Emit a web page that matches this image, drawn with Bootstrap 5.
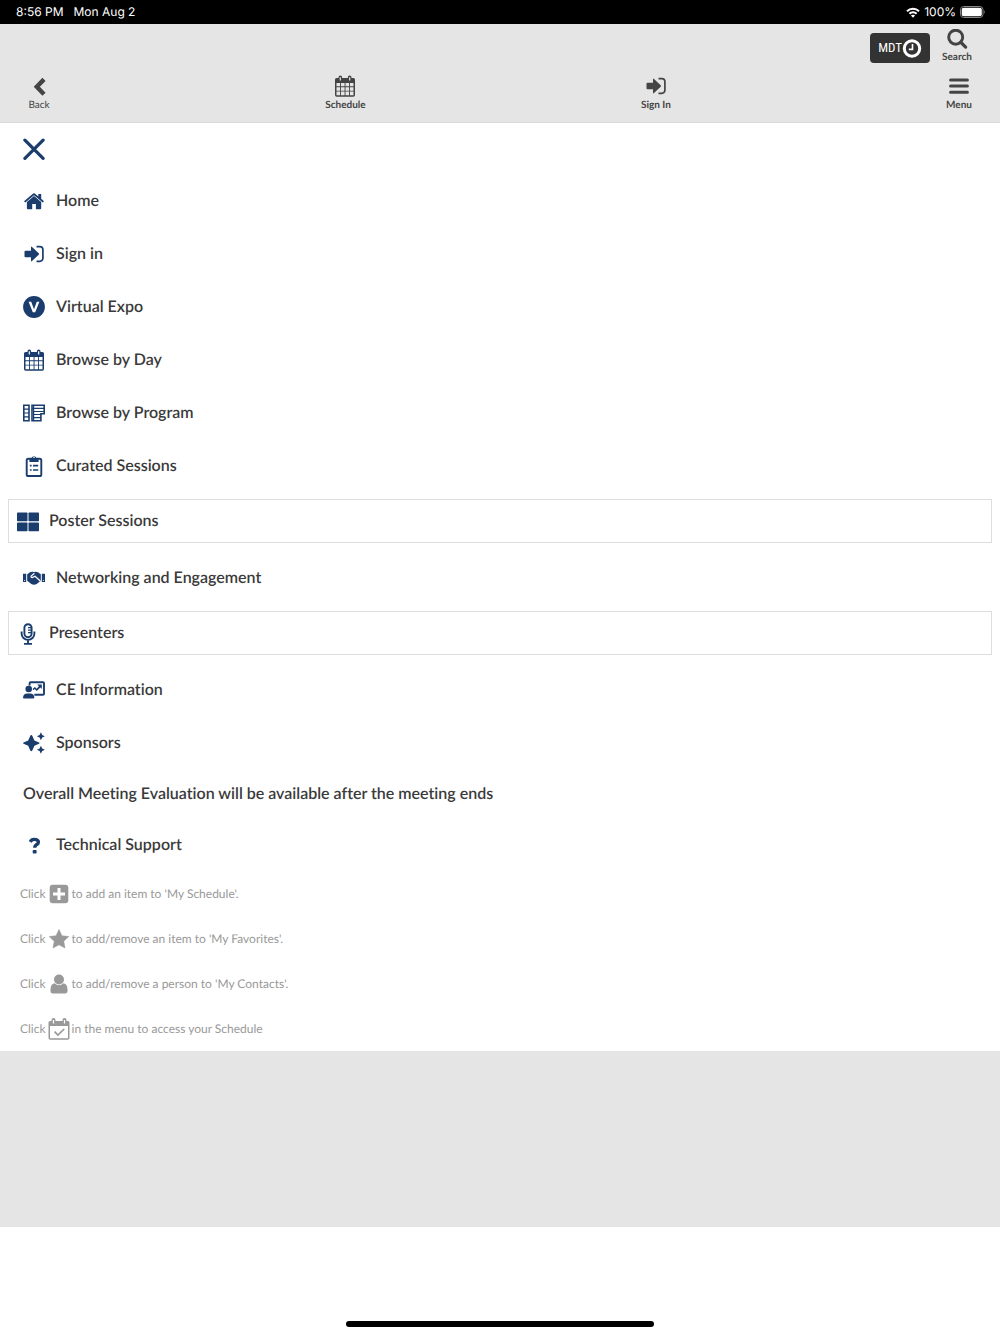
<!DOCTYPE html>
<html lang="en">
<head>
<meta charset="utf-8">
<meta name="viewport" content="width=device-width, initial-scale=1">
<title>Meeting menu</title>
<link rel="stylesheet" href="https://cdn.jsdelivr.net/npm/bootstrap@5.3.0/dist/css/bootstrap.min.css">
<style>
  :root { --navy: #1b3d6e; --ink: #3a3a3a; --panel: #e5e5e5; }
  body { font-family: Lato, sans-serif; color: var(--ink); background: #fff; font-variant-ligatures: none; text-rendering: geometricPrecision; }
  a { color: inherit; text-decoration: none; }
  svg { display: block; flex: none; }
  .status-bar { height: 24px; padding: 0 15px 0 16px; background: #000; color: #fff; font: 400 12px/24px Inter, sans-serif; }
  .clock { gap: 10px; }
  .app-header { background: var(--panel); border-bottom: 1px solid #d9d9d9; color: #444; padding: 5px 28px 10px; }
  .tool { display: flex; flex-direction: column; align-items: center; gap: 1px; font-size: 10px; line-height: 14px; font-weight: 700; }
  .tool-row { margin-top: 11px; }
  .zone-btn { margin-top: 4px; height: 30px; padding: 0 8px; background: #333; color: #fff; border: 0; border-radius: 4px; font: 13px/30px "Roboto Condensed", "Open Sans Condensed", Roboto, sans-serif; }
  .close-row { height: 51px; padding: 0 23px; }
  .menu-item { display: flex; align-items: center; gap: 11px; min-height: 53px; padding: 0 23px; font-size: 16px; line-height: 20px; font-weight: 600; }
  .menu-item svg { color: var(--navy); }
  .menu-item.boxed { gap: 10px; min-height: 44px; margin: 7px 8px 8px; padding: 0 8px; border: 1px solid #dcdfe0; }
  .menu-item.boxed svg { margin-top: 2px; }
  .menu-note { padding: 15px 23px 14px; font-size: 16px; line-height: 20px; font-weight: 600; }
  .hint { display: flex; align-items: center; gap: 2px; min-height: 45px; padding: 0 20px; font-size: 12px; line-height: 16px; color: #999; }
  .filler { height: 176px; background: var(--panel); }
  .home-bar { width: 308px; height: 6px; margin-bottom: 7px; border-radius: 3px; background: #000; }
</style>
<script defer src="https://cdn.jsdelivr.net/npm/bootstrap@5.3.0/dist/js/bootstrap.bundle.min.js"></script>
</head>
<body class="d-flex flex-column min-vh-100">
<svg width="0" height="0" class="position-absolute" aria-hidden="true">
  <symbol id="cal" viewBox="0 0 22 22">
    <path fill="currentColor" fill-rule="evenodd" d="M2.500 3H4.500V2.200a1.800 1.800 0 0 1 3.600 0V3H13.900V2.200a1.800 1.800 0 0 1 3.600 0V3H19.500a1.500 1.500 0 0 1 1.500 1.500V20a1.700 1.700 0 0 1-1.700 1.700H2.700A1.700 1.700 0 0 1 1 20V4.500A1.500 1.500 0 0 1 2.500 3ZM2.500 8V11.300H6.100V8ZM7 8V11.300H10.600V8ZM11.500 8V11.300H15V8ZM15.900 8V11.300H19.500V8ZM2.500 12.200V15.700H6.100V12.200ZM7 12.200V15.700H10.600V12.200ZM11.500 12.200V15.700H15V12.200ZM15.900 12.200V15.700H19.500V12.200ZM2.500 16.600V20.200H6.100V16.600ZM7 16.600V20.200H10.600V16.600ZM11.500 16.600V20.200H15V16.600ZM15.900 16.600V20.200H19.500V16.600ZM5.700 2.200V5.500H6.900V2.200ZM15.100 2.200V5.500H16.300V2.200Z"/>
  </symbol>
  <symbol id="enter" viewBox="0 0 22 22">
    <path fill="currentColor" d="M2.500 7.800H8V4.300q0-1.300 1-.4l6.700 6.400q.7.700 0 1.400l-6.700 6.400q-1 .9-1-.4V14.200H2.500q-1 0-1-1V8.800q0-1 1-1Z"/>
    <path fill="none" stroke="currentColor" stroke-width="1.700" d="M13.500 3.700h3.400a3 3 0 0 1 3 3v8.600a3 3 0 0 1-3 3H13.500"/>
  </symbol>
</svg>

<div class="status-bar d-flex justify-content-between">
  <div class="clock d-flex"><span>8:56 PM</span><span>Mon Aug 2</span></div>
  <div class="d-flex align-items-center gap-1">
    <svg width="14" height="11" viewBox="0 0 14 11"><g fill="none" stroke="#fff" stroke-width="2"><path d="M1 4.200a8.600 8.600 0 0 1 12 0"/><path d="M3.400 6.800a5.200 5.200 0 0 1 7.200 0"/></g><path fill="#fff" d="M4.900 8.600a3.100 3.100 0 0 1 4.200 0L7 10.800Z"/></svg>
    <span>100%</span>
    <svg width="25" height="12" viewBox="0 0 25 12"><rect x=".5" y=".5" width="22.500" height="11" rx="3.200" fill="none" stroke="#888"/><rect x="1.700" y="1.700" width="20.100" height="8.600" rx="2" fill="#fff"/><path fill="#888" d="M24 4.200q1.500 1.800 0 3.600Z"/></svg>
  </div>
</div>

<header class="app-header">
  <div class="d-flex justify-content-end align-items-start">
    <button class="zone-btn d-flex align-items-center me-2" type="button">MDT
      <svg width="20" height="20" viewBox="0 0 20 20" fill="none" stroke="#fff"><circle cx="10" cy="10.500" r="7.700" stroke-width="3"/><path stroke-width="1.600" d="M10.500 6.100V11.400H6.800"/></svg>
    </button>
    <a class="tool ms-1" href="#search">
      <svg width="22" height="20" viewBox="0 0 22 20" fill="none" stroke="currentColor"><circle cx="9.700" cy="8.200" r="7" stroke-width="2.900"/><path d="M15 13.500l4.600 4.600" stroke-width="3.200" stroke-linecap="round"/></svg>
      Search</a>
  </div>
  <nav class="tool-row d-flex justify-content-between">
    <a class="tool fw-normal" href="#back">
      <svg width="22" height="22" viewBox="0 0 22 22"><path d="M16 4.400L8.800 11.800l7.200 7.400" fill="none" stroke="currentColor" stroke-width="4.400"/></svg>
      Back</a>
    <a class="tool" href="#schedule"><svg width="22" height="22"><use href="#cal"/></svg>Schedule</a>
    <a class="tool" href="#signin"><svg width="22" height="22"><use href="#enter"/></svg>Sign In</a>
    <a class="tool" href="#menu">
      <svg width="20" height="22" viewBox="0 0 20 22"><path d="M1.600 4.900H18.400M1.600 11.100H18.400M1.600 17.300H18.400" stroke="currentColor" stroke-width="3" stroke-linecap="round"/></svg>
      Menu</a>
  </nav>
</header>

<main>
  <div class="close-row d-flex align-items-center">
    <button class="btn border-0 p-0" type="button" aria-label="Close menu">
      <svg width="22" height="22" viewBox="0 0 22 22"><path d="M1.900 2.200L20.100 20.400M20.100 2.200L1.900 20.400" stroke="#1b3d6e" stroke-width="3.200" stroke-linecap="round"/></svg>
    </button>
  </div>
  <nav>
    <a class="menu-item" href="#home">
      <svg width="22" height="22" viewBox="0 0 22 22" fill="currentColor"><path d="M11 6.100L18.200 12V18.200q0 1-1 1h-4.300V14H9.200v5.200H4.900q-1 0-1-1V12Z"/><path d="M10.200 3.600q.8-.6 1.600 0L15.300 6.400V3.900h2.900v4.900l2.800 2.400-1.200 1.300L11 5.300 2.300 12.500 1 11.200Z"/></svg>Home</a>
    <a class="menu-item" href="#signin"><svg width="22" height="22"><use href="#enter"/></svg>Sign in</a>
    <a class="menu-item" href="#expo">
      <svg width="22" height="22" viewBox="0 0 22 22"><circle cx="11" cy="11" r="10.900" fill="currentColor"/><path fill="#fff" d="M5.600 5.800H8.200L11 13.200 13.800 5.800H16.400L12.200 16.200H9.800Z"/></svg>Virtual Expo</a>
    <a class="menu-item" href="#day"><svg width="22" height="22"><use href="#cal"/></svg>Browse by Day</a>
    <a class="menu-item" href="#program">
      <svg width="22" height="22" viewBox="0 0 22 22" fill="none" stroke="currentColor"><path stroke-width="1.600" d="M.8 3.200H6V18.800H.8ZM9 3.200H21.200V11.800H17.900V18.800H9Z"/><path stroke-width="1.200" d="M1 7.100H6M1 11H6M1 14.900H6M9 6.400H21M11 9.500H21M11 12.500H18M11 15.600H18M10.600 3.200V18.800"/></svg>Browse by Program</a>
    <a class="menu-item" href="#curated">
      <svg width="22" height="22" viewBox="0 0 22 22"><rect x="3.700" y="3.800" width="14.600" height="17.200" rx="1.600" fill="none" stroke="currentColor" stroke-width="1.900"/><path fill="currentColor" fill-rule="evenodd" d="M6.400 3h2.200a2.500 2.500 0 0 1 4.800 0h2.200V6.900H6.400ZM11 1.800a.9.900 0 1 0 .01 0Z"/><path d="M6.900 10.600H8.600M10 10.600H15.200M6.900 15H8.600M10 15H15.200" stroke="currentColor" stroke-width="1.600"/></svg>Curated Sessions</a>
    <a class="menu-item boxed" href="#posters">
      <svg width="22" height="22" viewBox="0 0 22 22" fill="currentColor"><rect x="0" y="1.500" width="10.500" height="8.800" rx=".8"/><rect x="11.500" y="1.500" width="10.500" height="8.800" rx=".8"/><rect x="0" y="11.500" width="10.500" height="8.800" rx=".8"/><rect x="11.500" y="11.500" width="10.500" height="8.800" rx=".8"/></svg>Poster Sessions</a>
    <a class="menu-item" href="#networking">
      <svg width="22" height="22" viewBox="0 0 22 22"><path fill="currentColor" d="M0 6.800H3.200V15H0ZM18.800 6.800H22V15H18.800ZM4.200 7.200L7 5.300Q9 4.200 11 5.100 13.200 4.100 15 5.300L17.800 7.200V13.700L13.700 17Q11 18.600 8.300 17L4.200 13.800Z"/><path d="M11.400 6.300L8.100 9.100Q7.600 10.500 9.200 10.600L12 9.200 17.300 14" fill="none" stroke="#fff" stroke-width="1.200"/><path d="M1.200 13.400h.9M19.900 13.400h.9" stroke="#fff"/></svg>Networking and Engagement</a>
    <a class="menu-item boxed" href="#presenters">
      <svg width="22" height="22" viewBox="0 0 22 22" fill="none" stroke="currentColor" stroke-width="1.900"><rect x="7.400" y="1.200" width="7.200" height="13" rx="3.600"/><path d="M4.600 8.400V10.500a6.400 6.400 0 0 0 12.800 0V8.400M11 17V20.600M7 20.900H15"/><path stroke-width="1.100" d="M11 4.600H14.500M11 7.100H14.500M11 9.600H14.500"/></svg>Presenters</a>
    <a class="menu-item" href="#ce">
      <svg width="22" height="22" viewBox="0 0 22 22"><path d="M6.600 6.500V4.200q0-1 1-1H20q1 0 1 1V14.800q0 1-1 1H11.300" fill="none" stroke="currentColor" stroke-width="1.900"/><circle cx="5.700" cy="10" r="3.300" fill="currentColor"/><path fill="currentColor" d="M0 18.400Q.4 14.400 4.200 14.400H7.200Q11 14.400 11.400 18.400 11.400 19.500 10.400 19.500H1Q0 19.500 0 18.400ZM14.200 5.400H18.800V10L17.300 8.500 13.700 12 11.700 10.100 10.300 11.200 9.600 10 11.800 8.100 13.700 9.800 15.900 7.300Z"/></svg>CE Information</a>
    <a class="menu-item" href="#sponsors">
      <svg width="22" height="22" viewBox="0 0 22 22" fill="currentColor"><path d="M8.300 3Q9 3 9.300 3.700L11.400 8.400 16 10.400Q17.200 11 16 11.700L11.400 13.800 9.300 18.500Q8.300 20 7.300 18.500L5.200 13.800.6 11.700Q-.6 11 .6 10.400L5.200 8.400 7.300 3.700Q7.600 3 8.300 3ZM17.900.3L19.200 3 21.900 4.300 19.200 5.600 17.900 8.300 16.600 5.600 13.900 4.300 16.600 3ZM17.900 13.700L19.200 16.400 21.900 17.700 19.200 19 17.900 21.700 16.600 19 13.900 17.700 16.600 16.400Z"/></svg>Sponsors</a>
    <p class="menu-note m-0">Overall Meeting Evaluation will be available after the meeting ends</p>
    <a class="menu-item" href="#support">
      <svg width="22" height="22" viewBox="0 0 22 22"><path d="M7.200 7.900Q8.500 5.400 11 5.400 15.400 5.400 15.400 8.200 15.400 9.700 13.300 10.700 11.700 11.700 11.700 13.800" fill="none" stroke="currentColor" stroke-width="3.400"/><rect x="9.700" y="15.900" width="3.900" height="3.700" rx=".8" fill="currentColor"/></svg>Technical Support</a>
  </nav>
  <section>
    <div class="hint"><span>Click</span>
      <svg width="22" height="22" viewBox="0 0 22 22"><rect x="1.700" y="1.700" width="18.600" height="18.600" rx="3" fill="#999"/><path d="M11 5V17M5 11H17" stroke="#fff" stroke-width="3"/></svg>
      <span>to add an item to 'My Schedule'.</span></div>
    <div class="hint"><span>Click</span>
      <svg width="22" height="22" viewBox="0 0 22 22"><path fill="#999" d="M11 1.500L13.900 7.800 20.700 8.600 15.700 13.300 17 20 11 16.700 5 20 6.300 13.300 1.300 8.600 8.100 7.800Z" stroke="#999" stroke-linejoin="round" stroke-width=".6"/></svg>
      <span>to add/remove an item to 'My Favorites'.</span></div>
    <div class="hint"><span>Click</span>
      <svg width="22" height="22" viewBox="0 0 22 22" fill="#999"><circle cx="11" cy="6.500" r="5"/><path d="M6.600 10.300Q11 14 15.400 10.300 19.600 11 19.600 17.200 19.600 20.400 17 20.400H5Q2.400 20.400 2.400 17.200 2.400 11 6.600 10.300Z"/></svg>
      <span>to add/remove a person to 'My Contacts'.</span></div>
    <div class="hint"><span>Click</span>
      <svg width="22" height="22" viewBox="0 0 22 22"><path fill="#999" fill-rule="evenodd" d="M2 3H3.500V2a2 2 0 0 1 4 0V3H14.500V2a2 2 0 0 1 4 0V3H20a1.500 1.500 0 0 1 1.500 1.500V20a1.700 1.700 0 0 1-1.700 1.700H2.200A1.700 1.700 0 0 1 .5 20V4.500A1.500 1.500 0 0 1 2 3ZM2 8V20.200H20V8ZM4.900 2V5.500H6.100V2ZM15.900 2V5.500H17.100V2Z"/><path d="M6.600 13.700L9.900 17 16.200 11" fill="none" stroke="#999" stroke-width="1.700"/></svg>
      <span>in the menu to access your Schedule</span></div>
  </section>
</main>
<div class="filler"></div>
<footer class="flex-fill d-flex align-items-end justify-content-center"><div class="home-bar"></div></footer>
</body>
</html>
